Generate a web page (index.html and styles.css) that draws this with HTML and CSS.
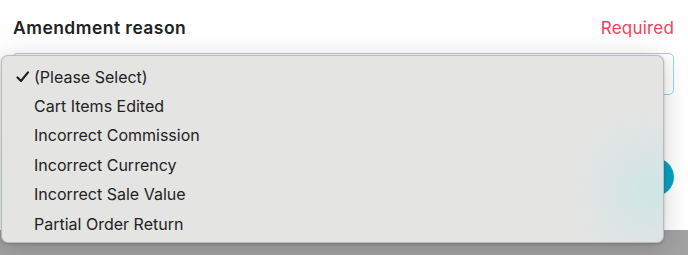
FILE: index.html
```html
<!DOCTYPE html>
<html lang="en">
<head>
<meta charset="utf-8">
<title>Amendment reason</title>
<link rel="stylesheet" href="styles.css">
</head>
<body>
<div class="screen">
  <div class="panel">
    <div class="field-head">
      <span class="label">Amendment reason</span>
      <span class="required">Required</span>
    </div>
    <div class="select-box"></div>
    <div class="actions">
      <button class="btn" type="button"></button>
    </div>
  </div>
  <div class="backdrop"></div>

  <ul class="menu">
    <li class="opt selected">
      <svg class="check" width="14" height="12" viewBox="0 0 14 12"><path d="M1.5 6.4 L5 10 L12 1.4" fill="none" stroke="#1e1e1e" stroke-width="2.1" stroke-linecap="round" stroke-linejoin="round"/></svg>
      <span>(Please Select)</span>
    </li>
    <li class="opt"><span>Cart Items Edited</span></li>
    <li class="opt"><span>Incorrect Commission</span></li>
    <li class="opt"><span>Incorrect Currency</span></li>
    <li class="opt"><span>Incorrect Sale Value</span></li>
    <li class="opt"><span>Partial Order Return</span></li>
  </ul>
</div>
</body>
</html>
```
FILE: styles.css
```css
* { box-sizing: border-box; }
html, body { margin: 0; padding: 0; }
body { background: #fff; width: 688px; height: 255px; overflow: hidden; }

.screen { position: relative; width: 688px; height: 255px; }

.panel {
  height: 230px;
  background: #fff;
  padding: 0 14px 0 12px;
  display: flex;
  flex-direction: column;
}

.field-head {
  display: flex;
  justify-content: space-between;
  align-items: baseline;
  padding-top: 17px;
  padding-left: 1px;
  height: 53px;
}
.label {
  font-family: "Inter", "Open Sans", sans-serif;
  font-weight: 600;
  font-size: 17.5px;
  color: #222;
  letter-spacing: 0.45px;
}
.required {
  font-family: "Inter", "Open Sans", sans-serif;
  font-weight: 400;
  font-size: 17px;
  color: #f2405b;
  letter-spacing: 0.2px;
}

.select-box {
  height: 42px;
  border: 1.5px solid #9bd5e4;
  border-radius: 5px;
  background: #fff;
}

.actions {
  display: flex;
  justify-content: flex-end;
  margin-top: 63px;
}
.btn {
  width: 120px;
  height: 38px;
  border: 0;
  border-radius: 19px;
  background: #07a4c4;
}

.backdrop { height: 25px; background: #a2a2a2; }

.menu {
  position: absolute;
  left: 1px;
  top: 55px;
  width: 663px;
  height: 188px;
  margin: 0;
  padding: 6px 0 0 0;
  list-style: none;
  border-radius: 7px;
  background:
    radial-gradient(circle at 650px 135px, rgba(204, 230, 230, 0.9) 0, rgba(212, 230, 229, 0.5) 45px, rgba(227, 227, 226, 0) 85px),
    #e4e4e3;
  border: 0.5px solid rgba(0, 0, 0, 0.18);
  box-shadow: 0 4px 26px rgba(0, 0, 0, 0.18), 0 1px 3px rgba(0, 0, 0, 0.2);
  font-family: "Inter", "Liberation Sans", sans-serif;
  font-size: 16px;
  color: #222;
}
.opt {
  position: relative;
  height: 29.4px;
  display: flex;
  align-items: center;
  padding-left: 32px;
}
.check { position: absolute; left: 14px; top: 9px; }
```
